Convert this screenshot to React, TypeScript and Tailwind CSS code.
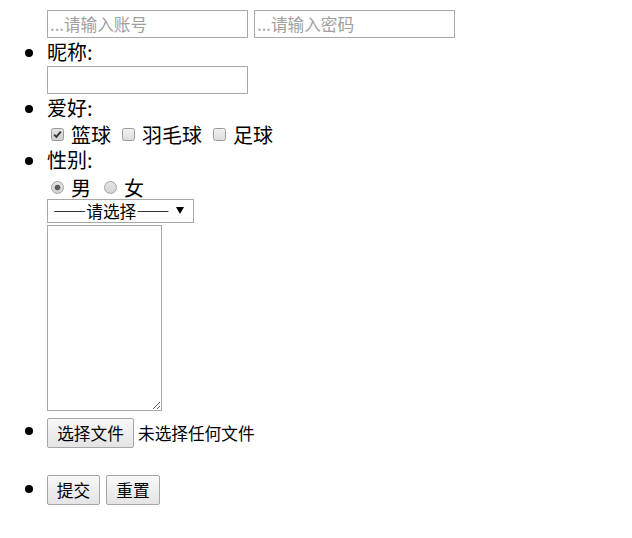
import React from 'react';

const Checkbox: React.FC<{ checked?: boolean }> = ({ checked }) => (
    <svg width="13" height="13" viewBox="0 0 13 13" className="shrink-0">
        <defs>
            <linearGradient id={checked ? 'cbOn' : 'cbOff'} x1="0" y1="0" x2="0" y2="1">
                <stop offset="0" stopColor={checked ? '#e4e4e4' : '#f2f2f2'} />
                <stop offset="1" stopColor={checked ? '#cfcfcf' : '#dcdcdc'} />
            </linearGradient>
        </defs>
        <rect x="0.5" y="0.5" width="12" height="12" rx="2" fill={`url(#${checked ? 'cbOn' : 'cbOff'})`} stroke="#9a9a9a" />
        {checked && <path d="M3.2 6.6 L5.4 8.9 L9.8 3.6" fill="none" stroke="#333" strokeWidth="1.9" />}
    </svg>
);

const Radio: React.FC<{ checked?: boolean }> = ({ checked }) => (
    <svg width="13" height="13" viewBox="0 0 13 13" className="shrink-0">
        <defs>
            <linearGradient id="rdBg" x1="0" y1="0" x2="0" y2="1">
                <stop offset="0" stopColor="#e6e6e6" />
                <stop offset="1" stopColor="#d2d2d2" />
            </linearGradient>
        </defs>
        <circle cx="6.5" cy="6.5" r="6" fill="url(#rdBg)" stroke="#a3a3a3" />
        {checked && <circle cx="6.5" cy="6.5" r="2.8" fill="#5a5a5a" />}
    </svg>
);

const btn = 'inline-block h-[30px] align-middle border border-[#a6a6a6] rounded-[2px] bg-gradient-to-b from-[#f8f8f8] to-[#e4e4e4] text-[16.67px] leading-[28px] text-black';

export default function App() {
    return (
        <div className="w-[632px] h-[538px] bg-white pt-[10px] font-['Noto_Sans_CJK_SC',sans-serif] text-black">
            <ul className="list-disc pl-[47px] text-[20px] leading-[26px]">
                {/* account / password */}
                <li className="list-none flex gap-[6px] h-[28px]">
                    <input
                        type="text"
                        placeholder="...请输入账号"
                        className="w-[201px] h-[28px] border border-[#a9a9a9] px-[2px] text-[16.67px] placeholder:text-[#a0a0a0] outline-none"
                    />
                    <input
                        type="password"
                        placeholder="...请输入密码"
                        className="w-[201px] h-[28px] border border-[#a9a9a9] px-[2px] text-[16.67px] placeholder:text-[#a0a0a0] outline-none"
                    />
                </li>

                <li>
                    <div className="h-[28px] leading-[28px]">昵称:</div>
                    <input type="text" className="block w-[201px] h-[28px] border border-[#a9a9a9] px-[2px] text-[16.67px] outline-none" />
                </li>

                <li>
                    <div className="h-[27px] leading-[27px]">爱好:</div>
                    <div className="flex items-center h-[26px] pt-[1px] leading-[22px]">
                        <span className="ml-[4px]"><Checkbox checked /></span>
                        <span className="ml-[7px]">篮球</span>
                        <span className="ml-[11px]"><Checkbox /></span>
                        <span className="ml-[7px]">羽毛球</span>
                        <span className="ml-[11px]"><Checkbox /></span>
                        <span className="ml-[7px]">足球</span>
                    </div>
                </li>

                <li>
                    <div className="h-[26px] leading-[24px]">性别:</div>
                    <div className="flex items-center h-[25px] pt-[2px] leading-[22px]">
                        <span className="ml-[4px]"><Radio checked /></span>
                        <span className="ml-[7px]">男</span>
                        <span className="ml-[13px]"><Radio /></span>
                        <span className="ml-[7px]">女</span>
                    </div>
                    <div className="relative w-[147px] h-[24px]">
                        <select className="block appearance-none w-full h-full border border-[#a9a9a9] bg-white pl-[5px] text-[16.67px] leading-[22px] outline-none [font-feature-settings:'fwid']">
                            <option>——请选择——</option>
                        </select>
                        <svg width="8" height="7" viewBox="0 0 8 7" className="absolute right-[10px] top-[8px] pointer-events-none">
                            <path d="M0 0 H8 L4 7 Z" fill="#000" />
                        </svg>
                    </div>
                    <textarea className="block mt-[2px] w-[115px] h-[186px] border border-[#a9a9a9] outline-none resize" />
                </li>

                <li className="mt-[6px]">
                    <button className={`${btn} w-[87px]`}>选择文件</button>
                    <span className="ml-[4px] text-[16.67px] align-middle">未选择任何文件</span>
                </li>

                <li className="mt-[27px]">
                    <button className={`${btn} w-[53px]`}>提交</button>
                    <button className={`${btn} w-[54px] ml-[6px]`}>重置</button>
                </li>
            </ul>
        </div>
    );
}
